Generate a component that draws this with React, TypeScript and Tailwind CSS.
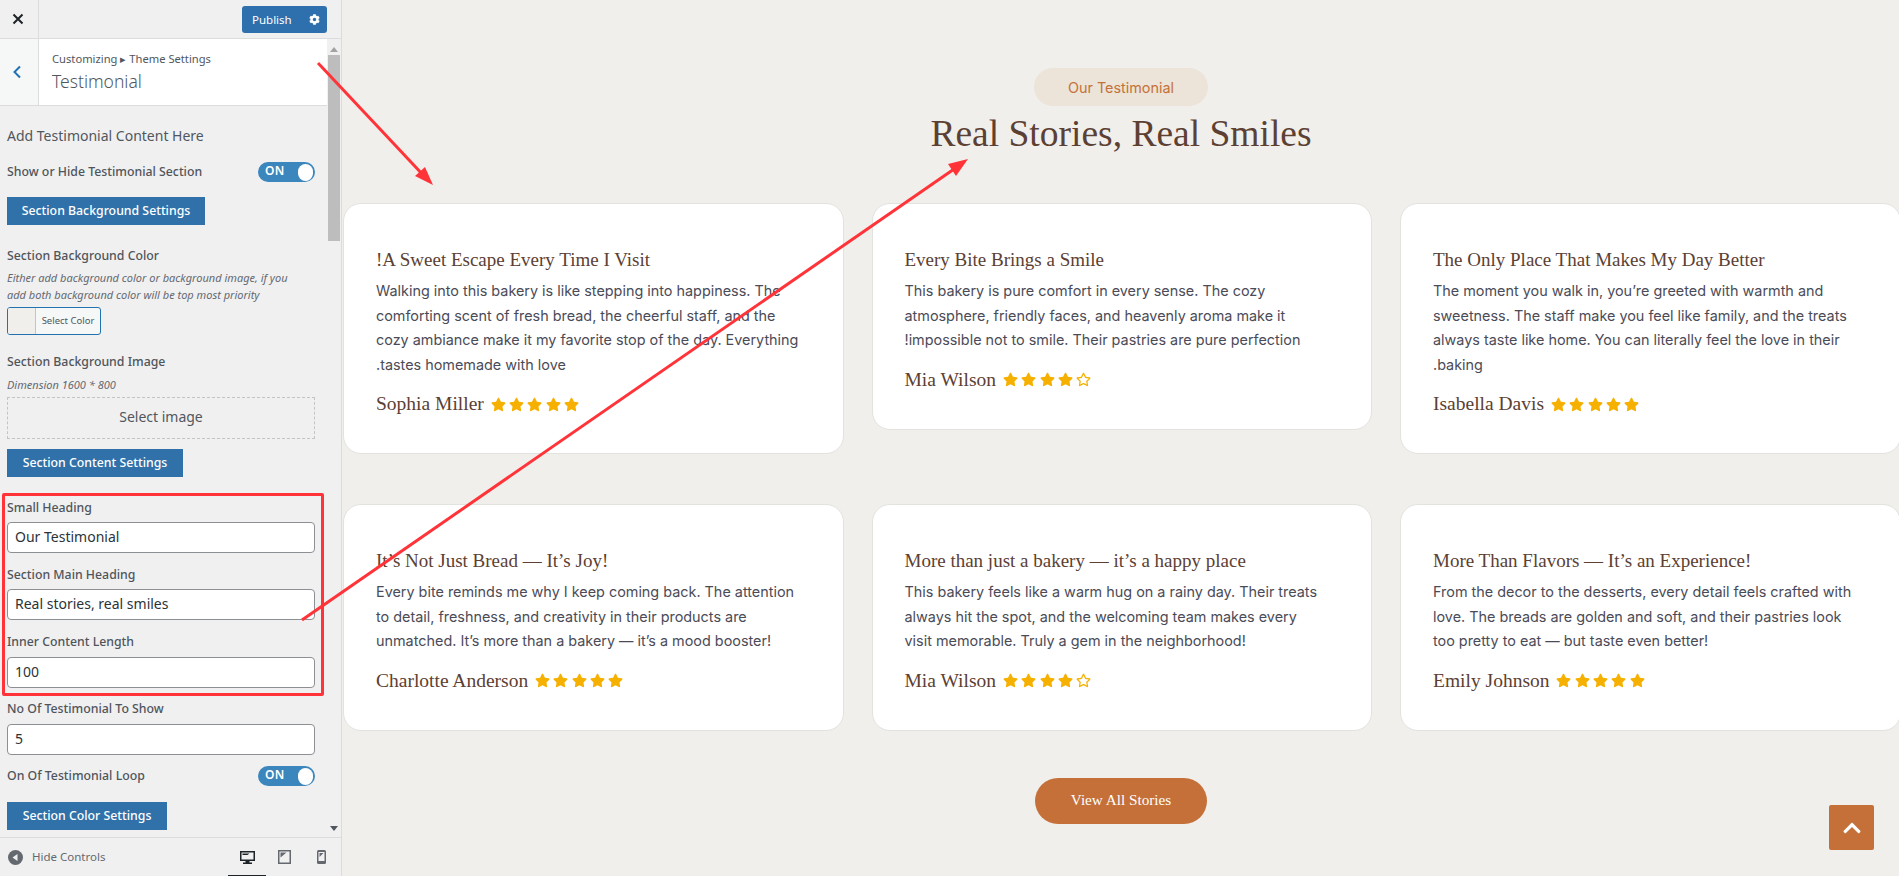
import React from "react";
import { FaStar, FaRegStar, FaCog, FaChevronUp } from "react-icons/fa";

const ui = "font-['Noto_Sans',sans-serif]";
const serif = "font-['Liberation_Serif',serif]";
const inter = "font-['Inter',sans-serif]";

function Label({ children, cls = "" }: { children: React.ReactNode; cls?: string }) {
  return <div className={`text-[12.3px] leading-[17px] font-medium text-[#4f555b] ${cls}`}>{children}</div>;
}

function Toggle({ cls = "" }: { cls?: string }) {
  return (
    <div className={`w-[57px] h-[20px] rounded-full bg-[#3a86bd] flex items-center justify-between pl-[7px] pr-[2px] ${cls}`}>
      <span className="text-white text-[12px] font-semibold leading-none tracking-wide pb-[2px]">ON</span>
      <span className="w-[15px] h-[17px] rounded-full bg-white" />
    </div>
  );
}

function SectionBtn({ children, w, cls = "" }: { children: React.ReactNode; w: string; cls?: string }) {
  return (
    <div className={`${w} h-[28px] bg-[#3071a9] text-white text-[12.3px] font-medium flex items-center justify-center ${cls}`}>
      {children}
    </div>
  );
}

function Input({ value, cls = "" }: { value: string; cls?: string }) {
  return (
    <div className={`w-[308px] h-[31px] bg-white border border-[#8c8f94] rounded-[4px] pl-[7px] pb-[2px] flex items-center text-[14px] text-[#2c3338] ${cls}`}>
      {value}
    </div>
  );
}

function Sidebar() {
  return (
    <aside className={`w-[342px] h-full shrink-0 bg-[#f0f0f1] border-r border-[#dcdcde] flex flex-col ${ui}`}>
      <div className="h-[39px] shrink-0 flex border-b border-[#dcdcde]">
        <div className="w-[39px] border-r border-[#dcdcde] flex items-center justify-center pr-[3px]">
          <svg width="12" height="12" viewBox="0 0 12 12"><path d="M1.500 1.500l9 9M10.500 1.500l-9 9" stroke="#1d2327" strokeWidth="2" /></svg>
        </div>
        <div className="ml-[203px] mt-[6px] w-[85px] h-[27px] bg-[#2e6fad] rounded-[3px] flex items-center text-white text-[11.500px]">
          <span className="ml-[10px]">Publish</span>
          <FaCog className="ml-[17px] text-[11px]" />
        </div>
      </div>
      <div className="flex flex-1 min-h-0">
        <div className="w-[327px] shrink-0 flex flex-col">
          <div className="h-[67px] shrink-0 flex border-b border-[#dcdcde]">
            <div className="w-[39px] bg-[#f6f7f7] border-r border-[#dcdcde] flex items-center justify-center pr-[5px]">
              <svg width="10" height="14" viewBox="0 0 10 14"><path d="M8 1.500L2.500 7 8 12.500" stroke="#2271b1" strokeWidth="2" fill="none" /></svg>
            </div>
            <div className="flex-1 bg-white pl-[13px] pt-[11px] text-[#50575e]">
              <div className="text-[11.200px] leading-[18px]">Customizing ▸ Theme Settings</div>
              <div className="text-[17.500px] leading-[26px] font-light">Testimonial</div>
            </div>
          </div>
          <div className="flex-1 min-h-0 pl-[7px] pt-[20px]">
            <div className="text-[14px] leading-[20px] text-[#50575e]">Add Testimonial Content Here</div>
            <div className="w-[308px] mt-[16px] h-[20px] flex items-center justify-between">
              <Label cls="pb-[2px]">Show or Hide Testimonial Section</Label>
              <Toggle />
            </div>
            <SectionBtn w="w-[198px]" cls="mt-[15px]">Section Background Settings</SectionBtn>
            <Label cls="mt-[22px]">Section Background Color</Label>
            <div className="text-[11px] leading-[17px] italic text-[#646970] mt-[5px]">
              Either add background color or background image, if you
              <br />
              add both background color will be top most priority
            </div>
            <div className="mt-[4px] w-[94px] h-[28px] border border-[#2271b1] rounded-[3px] bg-[#f6f7f7] flex overflow-hidden">
              <div className="w-[28px] bg-[#f0efeb] border-r border-[#c3c4c7]" />
              <div className="flex-1 flex items-center justify-center text-[9.500px] text-[#50575e]">Select Color</div>
            </div>
            <Label cls="mt-[18px]">Section Background Image</Label>
            <div className="text-[11px] leading-[17px] italic text-[#646970] mt-[6px]">Dimension 1600 * 800</div>
            <div className="mt-[4px] w-[308px] h-[42px] border border-dashed border-[#c3c4c7] pb-[3px] flex items-center justify-center text-[14px] text-[#50575e]">
              Select image
            </div>
            <SectionBtn w="w-[176px]" cls="mt-[10px]">Section Content Settings</SectionBtn>
            <div className="-ml-[5px] mt-[16px] w-[322px] h-[203px] border-[3px] border-[#ff3338] rounded-[2px] pl-[2px] pt-[3px]">
              <Label>Small Heading</Label>
              <Input value="Our Testimonial" cls="mt-[6px]" />
              <Label cls="mt-[13px]">Section Main Heading</Label>
              <Input value="Real stories, real smiles" cls="mt-[6px]" />
              <Label cls="mt-[13px]">Inner Content Length</Label>
              <Input value="100" cls="mt-[7px]" />
            </div>
            <Label cls="mt-[4px]">No Of Testimonial To Show</Label>
            <Input value="5" cls="mt-[7px]" />
            <div className="w-[308px] mt-[11px] h-[20px] flex items-center justify-between">
              <Label cls="pb-[2px]">On Of Testimonial Loop</Label>
              <Toggle />
            </div>
            <SectionBtn w="w-[160px]" cls="mt-[16px]">Section Color Settings</SectionBtn>
          </div>
        </div>
        <div className="flex-1 bg-[#f0f0f1] flex flex-col items-center pt-[8px] pb-[6px]">
          <svg width="8" height="5" viewBox="0 0 8 5"><path d="M4 0l4 5H0z" fill="#a3a3a3" /></svg>
          <div className="w-[12px] h-[186px] bg-[#bdbdbd] mt-[3px]" />
          <div className="flex-1" />
          <svg width="8" height="5" viewBox="0 0 8 5"><path d="M4 5L0 0h8z" fill="#50575e" /></svg>
        </div>
      </div>
      <div className="h-[39px] shrink-0 border-t border-[#dcdcde] flex items-center relative">
        <svg className="ml-[8px]" width="15" height="15" viewBox="0 0 15 15">
          <circle cx="7.500" cy="7.500" r="7.500" fill="#646970" />
          <path d="M9.500 4v7L4.500 7.500z" fill="#f0f0f1" />
        </svg>
        <span className="ml-[9px] text-[11.500px] text-[#646970]">Hide Controls</span>
        <div className="ml-auto mr-[15px] flex items-center">
          <svg width="15" height="15" viewBox="0 0 15 15">
            <path d="M0 1h15v10H9.500v1.500H12V14H3v-1.500h2.500V11H0zM1.500 2.500v7h12v-7z" fill="#1d2327" fillRule="evenodd" />
            <path d="M2.500 3.500h7l-2 1.500h-5z" fill="#1d2327" />
          </svg>
          <svg className="ml-[23px]" width="13" height="14" viewBox="0 0 13 14">
            <path d="M0 0h13v14H0zM1.500 1.500v11h10v-11z" fill="#646970" fillRule="evenodd" />
            <path d="M2.500 2.500h6l-6 5z" fill="#646970" />
          </svg>
          <svg className="ml-[26px]" width="9" height="14" viewBox="0 0 9 14">
            <rect width="9" height="14" rx="1.500" fill="#646970" />
            <path d="M1.500 2h6v9h-6z" fill="#f0f0f1" />
            <path d="M2.500 3h4l-4 4z" fill="#646970" />
          </svg>
        </div>
        <div className="absolute left-[228px] bottom-0 w-[38px] h-[1px] bg-[#1d2327]" />
      </div>
    </aside>
  );
}

function Stars({ n }: { n: number }) {
  return (
    <span className="flex ml-[7px] gap-[3.300px] text-[15px] text-[#f5b000]">
      {[0, 1, 2, 3, 4].map((i) => (i < n ? <FaStar key={i} /> : <FaRegStar key={i} />))}
    </span>
  );
}

function Card({ title, lines, name, stars }: { title: string; lines: string[]; name: string; stars: number }) {
  return (
    <div className="self-start bg-white border border-[#e2e2de] rounded-[18px] px-[32px] pt-[43px] pb-[36px]">
      <h3 className={`${serif} text-[19px] leading-[26px] text-[#5c4033]`}>{title}</h3>
      <div className={`${inter} text-[14.400px] leading-[24.500px] text-[#4b4b57] mt-[6px]`}>
        {lines.map((l) => (
          <div key={l} className="whitespace-nowrap">{l}</div>
        ))}
      </div>
      <div className="flex items-center mt-[14px] h-[26px]">
        <span className={`${serif} text-[19.500px] text-[#5c4033]`}>{name}</span>
        <Stars n={stars} />
      </div>
    </div>
  );
}

const cards = [
  { title: "!A Sweet Escape Every Time I Visit", lines: ["Walking into this bakery is like stepping into happiness. The", "comforting scent of fresh bread, the cheerful staff, and the", "cozy ambiance make it my favorite stop of the day. Everything", ".tastes homemade with love"], name: "Sophia Miller", stars: 5 },
  { title: "Every Bite Brings a Smile", lines: ["This bakery is pure comfort in every sense. The cozy", "atmosphere, friendly faces, and heavenly aroma make it", "!impossible not to smile. Their pastries are pure perfection"], name: "Mia Wilson", stars: 4 },
  { title: "The Only Place That Makes My Day Better", lines: ["The moment you walk in, you’re greeted with warmth and", "sweetness. The staff make you feel like family, and the treats", "always taste like home. You can literally feel the love in their", ".baking"], name: "Isabella Davis", stars: 5 },
  { title: "It’s Not Just Bread — It’s Joy!", lines: ["Every bite reminds me why I keep coming back. The attention", "to detail, freshness, and creativity in their products are", "unmatched. It’s more than a bakery — it’s a mood booster!"], name: "Charlotte Anderson", stars: 5 },
  { title: "More than just a bakery — it’s a happy place", lines: ["This bakery feels like a warm hug on a rainy day. Their treats", "always hit the spot, and the welcoming team makes every", "visit memorable. Truly a gem in the neighborhood!"], name: "Mia Wilson", stars: 4 },
  { title: "More Than Flavors — It’s an Experience!", lines: ["From the decor to the desserts, every detail feels crafted with", "love. The breads are golden and soft, and their pastries look", "too pretty to eat — but taste even better!"], name: "Emily Johnson", stars: 5 },
];

export default function App() {
  return (
    <div className="relative w-[1899px] h-[876px] overflow-hidden flex bg-[#f0efeb]">
      <Sidebar />
      <main className="flex-1 min-w-0 flex flex-col items-center pt-[68px] pl-[1px]">
        <div className={`${inter} w-[174px] h-[38px] pt-[1px] shrink-0 rounded-full bg-[#ece3d9] text-[#c47238] text-[14.400px] flex items-center justify-center`}>
          Our Testimonial
        </div>
        <h2 className={`${serif} mt-[1px] text-[37.500px] leading-[54px] text-[#5c4033]`}>Real Stories, Real Smiles</h2>
        <div className="self-start grid grid-cols-[500.500px_500.500px_500.500px] gap-x-[28px] gap-y-[50px] mt-[42px]">
          {cards.map((c) => (
            <Card key={c.title} {...c} />
          ))}
        </div>
        <div className={`${serif} mt-[47px] w-[172px] h-[46px] rounded-full bg-[#c47038] text-white text-[15.200px] flex items-center justify-center shrink-0`}>
          View All Stories
        </div>
      </main>
      <div className="absolute left-[1829px] top-[805px] w-[45px] h-[45px] rounded-[2px] bg-[#c47038] flex items-center justify-center text-white text-[20px]">
        <FaChevronUp />
      </div>
      <svg className="absolute inset-0 pointer-events-none" width="1899" height="876" viewBox="0 0 1899 876">
        <path d="M318 63L425 177" stroke="#ff3338" strokeWidth="3" />
        <path d="M433 185l-18-9 10-9z" fill="#ff3338" />
        <path d="M302 620L957 167" stroke="#ff3338" strokeWidth="3" />
        <path d="M968 159l-12 17-8-12z" fill="#ff3338" />
      </svg>
    </div>
  );
}
